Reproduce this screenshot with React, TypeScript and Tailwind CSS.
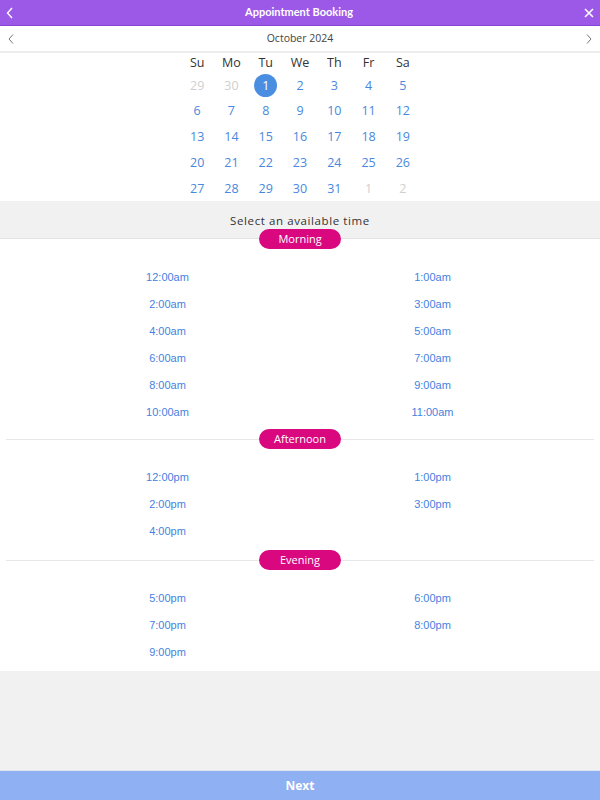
import React from "react";

const days = ["Su", "Mo", "Tu", "We", "Th", "Fr", "Sa"];
const weeks: { d: number; muted?: boolean; sel?: boolean }[][] = [
  [{ d: 29, muted: true }, { d: 30, muted: true }, { d: 1, sel: true }, { d: 2 }, { d: 3 }, { d: 4 }, { d: 5 }],
  [6, 7, 8, 9, 10, 11, 12].map((d) => ({ d })),
  [13, 14, 15, 16, 17, 18, 19].map((d) => ({ d })),
  [20, 21, 22, 23, 24, 25, 26].map((d) => ({ d })),
  [{ d: 27 }, { d: 28 }, { d: 29 }, { d: 30 }, { d: 31 }, { d: 1, muted: true }, { d: 2, muted: true }],
];

const morning = ["12:00am", "1:00am", "2:00am", "3:00am", "4:00am", "5:00am", "6:00am", "7:00am", "8:00am", "9:00am", "10:00am", "11:00am"];
const afternoon = ["12:00pm", "1:00pm", "2:00pm", "3:00pm", "4:00pm"];
const evening = ["5:00pm", "6:00pm", "7:00pm", "8:00pm", "9:00pm"];

function Pill({ label }: { label: string }) {
  return (
    <span className="relative flex h-5 w-[82px] items-center justify-center rounded-full bg-[#d9087f] text-[11px] font-medium text-white [font-family:'Open_Sans',sans-serif]">
      {label}
    </span>
  );
}

function Slots({ items }: { items: string[] }) {
  return (
    <div className="grid grid-cols-2 px-[35px] pt-[14px]">
      {items.map((t) => (
        <div key={t} className="flex h-[27px] items-center justify-center pt-[2px] text-[11px] text-[#4682e0] [font-family:'Liberation_Sans',Arial,sans-serif]">
          {t}
        </div>
      ))}
    </div>
  );
}

function Divider({ label }: { label: string }) {
  return (
    <div className="relative flex h-5 items-center justify-center">
      <div className="absolute inset-x-1.5 top-1/2 h-px bg-[#e8e8e8]" />
      <Pill label={label} />
    </div>
  );
}

export default function App() {
  return (
    <div className="flex h-[800px] w-[600px] flex-col bg-[#f1f1f1] [font-family:'Open_Sans',sans-serif]">
      {/* Header */}
      <div className="flex h-[26px] items-center justify-between border-b border-[#8744d4] bg-[#9c58e6] px-[5px] text-white">
        <svg width="10" height="12" viewBox="0 0 10 12" fill="none" stroke="white" strokeWidth="1.4">
          <path d="M7 1 L2.5 6 L7 11" />
        </svg>
        <span className="text-[11px] font-bold [font-family:Lato,sans-serif]">Appointment Booking</span>
        <svg width="12" height="12" viewBox="0 0 12 12" fill="none" stroke="white" strokeWidth="1.6">
          <path d="M2 2 L10 10 M10 2 L2 10" />
        </svg>
      </div>

      {/* Month bar */}
      <div className="flex h-[27px] items-center justify-between border-b-2 border-[#ebeded] bg-white px-[6px]">
        <svg width="10" height="12" viewBox="0 0 10 12" fill="none" stroke="#777" strokeWidth="1">
          <path d="M7 1.5 L3 6 L7 10.5" />
        </svg>
        <span className="text-[10.5px] text-[#444]">October 2024</span>
        <svg width="10" height="12" viewBox="0 0 10 12" fill="none" stroke="#777" strokeWidth="1">
          <path d="M3 1.5 L7 6 L3 10.5" />
        </svg>
      </div>

      {/* Calendar */}
      <div className="bg-white pt-[1px]">
        <div className="mx-auto w-[240px]">
          <div className="grid h-[18px] grid-cols-7 items-center">
            {days.map((d) => (
              <div key={d} className="text-center text-[12.5px] text-[#333]">
                {d}
              </div>
            ))}
          </div>
          {weeks.map((w, i) => (
            <div key={i} className="grid h-[25.75px] grid-cols-7 items-center pt-[2px]">
              {w.map((c, j) => (
                <div key={j} className="flex justify-center">
                  {c.sel ? (
                    <span className="flex h-[23px] w-[23px] items-center justify-center rounded-full bg-[#4a8ee2] text-[12.5px] text-white">
                      {c.d}
                    </span>
                  ) : (
                    <span className={`text-[12.5px] ${c.muted ? "text-[#cfcfcf]" : "text-[#4a88de]"}`}>{c.d}</span>
                  )}
                </div>
              ))}
            </div>
          ))}
        </div>
      </div>

      {/* Select time header */}
      <div className="flex h-[38px] items-center justify-center border-b border-[#e3e3e3] bg-[#f1f1f1] pt-[3px]">
        <span className="text-[11.5px] tracking-[0.6px] text-[#333]">Select an available time</span>
      </div>

      {/* Slots */}
      <div className="bg-white pb-[6px]">
        <div className="-mt-[10px] flex justify-center">
          <Pill label="Morning" />
        </div>
        <div className="pb-[4px]">
          <Slots items={morning} />
        </div>
        <Divider label="Afternoon" />
        <div className="pb-[6px]">
          <Slots items={afternoon} />
        </div>
        <Divider label="Evening" />
        <Slots items={evening} />
      </div>

      <div className="flex-1" />

      {/* Footer */}
      <div className="flex h-[30px] items-center justify-center border-t border-[#dfe5f0] bg-[#8fb0f2]">
        <span className="text-[12px] font-bold text-white">Next</span>
      </div>
    </div>
  );
}
